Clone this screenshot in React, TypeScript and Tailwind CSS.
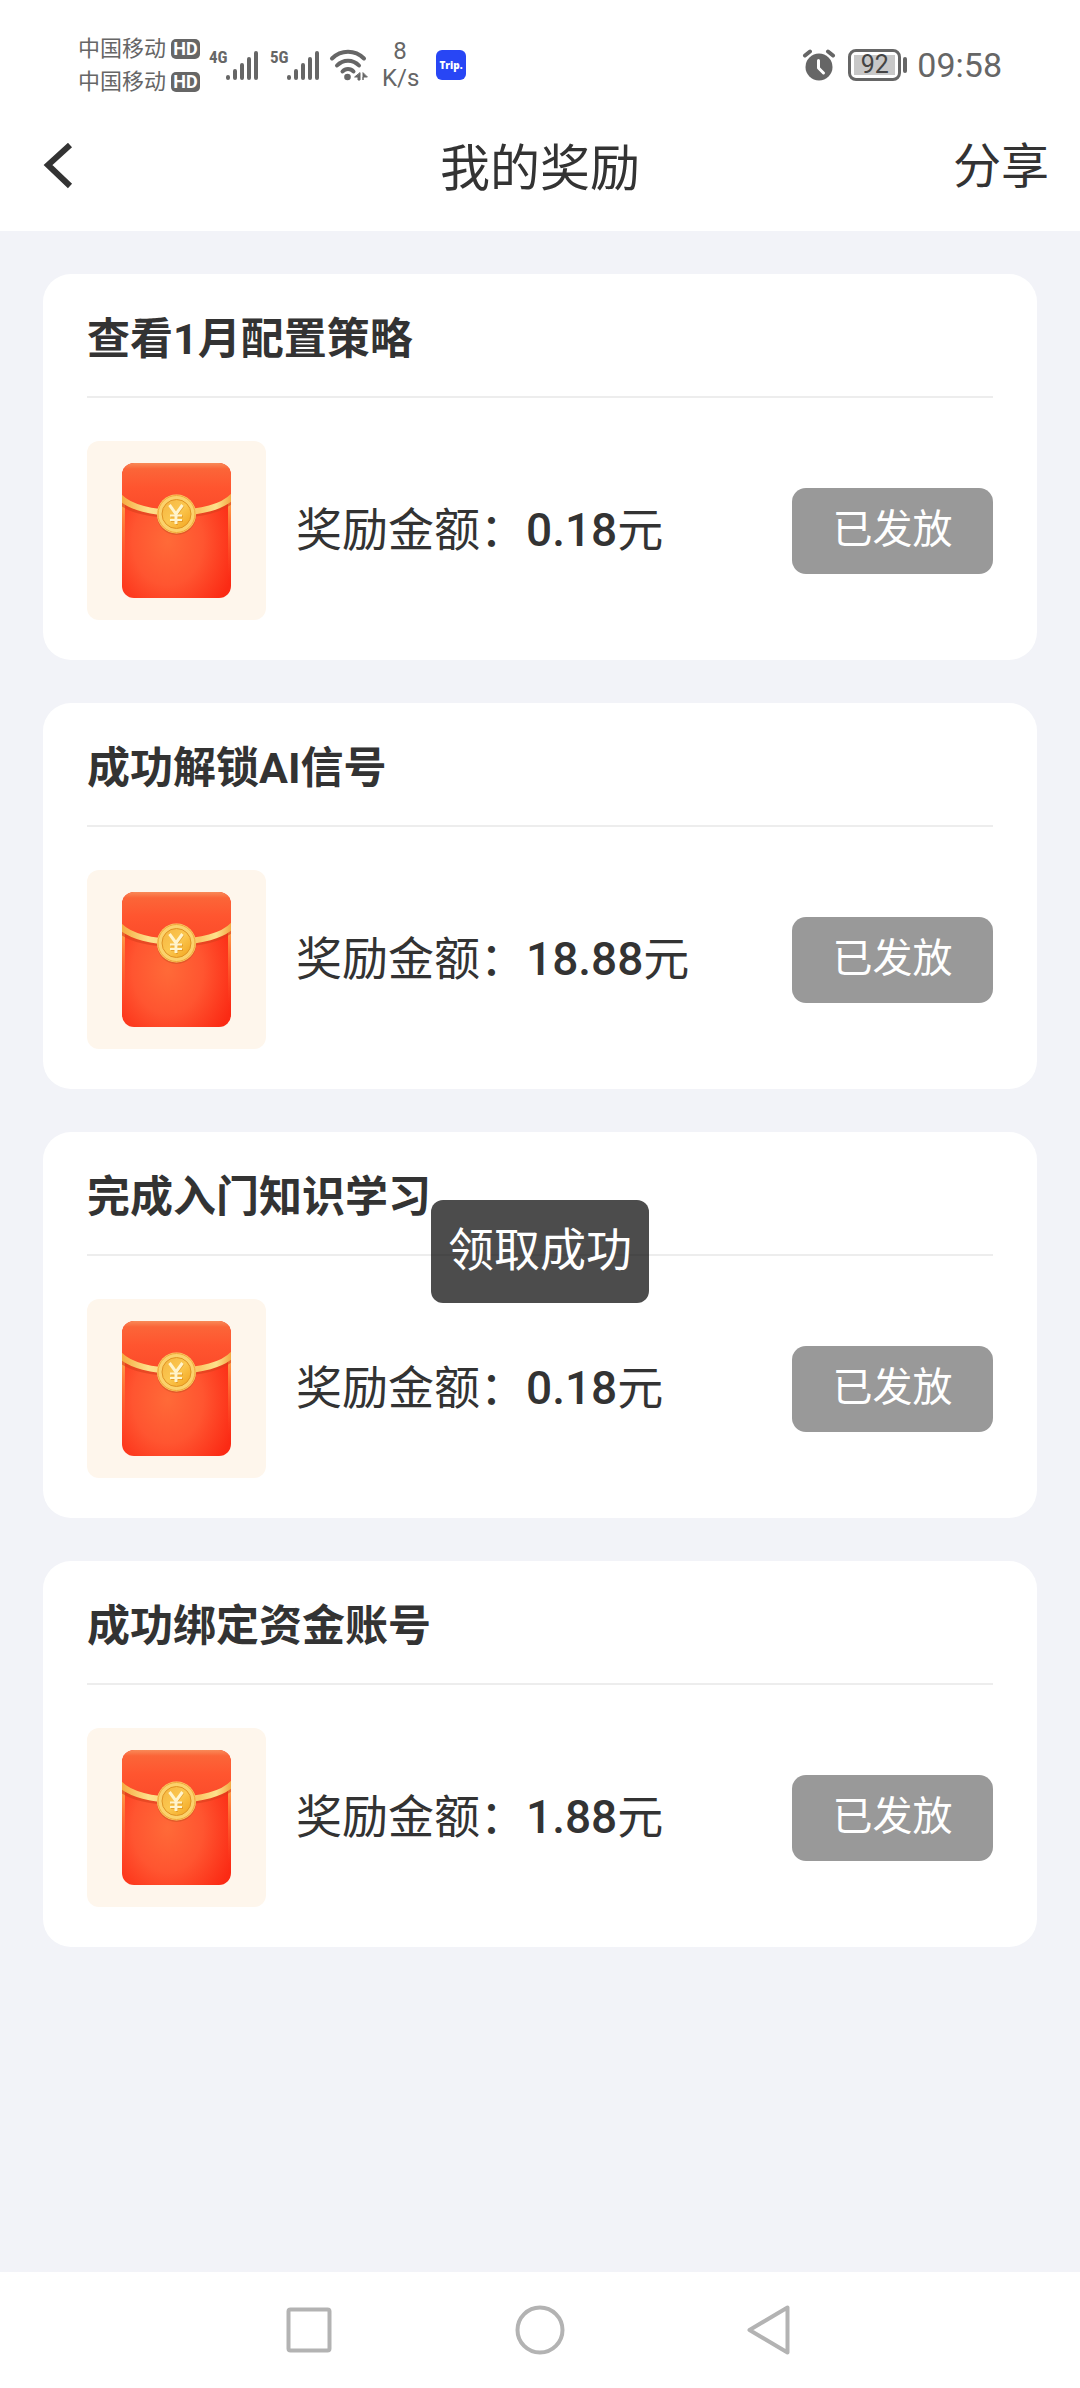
type Reward = { title: string; amount: string };

const rewards: Reward[] = [
  { title: "查看1月配置策略", amount: "0.18" },
  { title: "成功解锁AI信号", amount: "18.88" },
  { title: "完成入门知识学习", amount: "0.18" },
  { title: "成功绑定资金账号", amount: "1.88" },
];

function Carrier() {
  return (
    <div className="flex items-center gap-[5px]">
      <span className="text-[22px] leading-[33px] whitespace-nowrap">中国移动</span>
      <span className="flex h-5 w-[29px] items-center justify-center rounded-[5px] bg-[#666666] text-[18px] leading-5 font-bold text-white">
        HD
      </span>
    </div>
  );
}

function Signal({ label }: { label: string }) {
  return (
    <div className="flex h-[31px] items-start">
      <span className="w-4 text-[17px] leading-[14px] font-bold whitespace-nowrap font-['Roboto_Condensed',Roboto,sans-serif]">
        {label}
      </span>
      <svg className="h-[31px] w-[34px]" viewBox="0 0 34 31" stroke="#666666" strokeWidth="4" strokeLinecap="round" aria-hidden="true">
        <path d="M3 27v1M10 21v7M17 15v13M24 9v19M31 3v25" />
      </svg>
    </div>
  );
}

function WifiIcon() {
  return (
    <svg className="h-8 w-[39px]" viewBox="0 0 39 32" fill="none" stroke="#666666" strokeLinecap="round" aria-hidden="true">
      <path d="M3 9.5C12 0.5 26 0.5 35 9.5" strokeWidth="4" />
      <path d="M8 16.5c6-6.5 16-6.5 22 0" strokeWidth="4" />
      <path d="M13.5 22.5c3-3.5 8-3.5 11 0" strokeWidth="4" />
      <circle cx="18.5" cy="28" r="3.3" fill="#666666" stroke="none" />
      <path d="M31 24v7h-2v-3h-3zM34 24v7v-3h4z" fill="#666666" strokeWidth="1" strokeLinejoin="round" />
    </svg>
  );
}

function AlarmIcon() {
  return (
    <svg className="h-8 w-[34px]" viewBox="0 0 34 32" fill="none" aria-hidden="true">
      <circle cx="17" cy="18" r="13.5" fill="#666666" />
      <path d="M3 6.5L8 2.5M31 6.5L26 2.5" stroke="#666666" strokeWidth="4" strokeLinecap="round" />
      <path d="M16.5 11.5v7.5l5 5" stroke="#fff" strokeWidth="3" strokeLinecap="round" strokeLinejoin="round" />
    </svg>
  );
}

function StatusBar() {
  return (
    <div className="flex h-[103px] items-center justify-between pt-[27px] pr-[78px] pl-[78px] text-[#666666]">
      <div className="flex items-center">
        <div>
          <Carrier />
          <Carrier />
        </div>
        <div className="ml-[9px] flex gap-[11px]">
          <Signal label="4G" />
          <Signal label="5G" />
        </div>
        <div className="ml-[9px]">
          <WifiIcon />
        </div>
        <div className="ml-[14px] flex w-9 flex-col text-center text-[24px] leading-[27px]">
          <span>8</span>
          <span>K/s</span>
        </div>
        <div className="ml-[18px] flex h-[30px] w-[30px] items-center justify-center rounded-[6px] bg-[#2846f5] text-[10px] font-extrabold text-white font-['Open_Sans',sans-serif]">
          Trip.
        </div>
      </div>
      <div className="flex items-center">
        <AlarmIcon />
        <div className="ml-[12px] flex h-8 w-[53px] rounded-[8px] border-[3px] border-[#666666] p-[3px]">
          <span className="flex flex-1 items-center justify-center bg-[#c8c8c8] text-[25px] leading-5 text-[#444444]">
            92
          </span>
        </div>
        <div className="ml-[2px] h-4 w-1 rounded-full bg-[#666666]" />
        <span className="ml-[10px] text-[34px] leading-10">09:58</span>
      </div>
    </div>
  );
}

function RedPacket() {
  return (
    <svg className="h-[179px] w-[179px] shrink-0 rounded-[12px] bg-[#fef6ec]" viewBox="0 0 179 179" fill="none" aria-hidden="true">
      <defs>
        <radialGradient id="packet" cx="0.42" cy="0.58" r="0.65">
          <stop offset="0" stopColor="#ff6a38" />
          <stop offset="0.5" stopColor="#ff5530" />
          <stop offset="1" stopColor="#fb2a14" />
        </radialGradient>
        <linearGradient id="flap" x1="0" y1="0" x2="0" y2="1">
          <stop offset="0" stopColor="#f88a58" />
          <stop offset="0.12" stopColor="#fb6538" />
          <stop offset="0.5" stopColor="#ff552f" />
          <stop offset="1" stopColor="#fb4b2a" />
        </linearGradient>
        <linearGradient id="cord" x1="0" y1="0" x2="1" y2="0">
          <stop offset="0" stopColor="#f5a83c" />
          <stop offset="0.25" stopColor="#fde08a" />
          <stop offset="0.7" stopColor="#fbc766" />
          <stop offset="0.85" stopColor="#fde28c" />
          <stop offset="1" stopColor="#f2a23a" />
        </linearGradient>
        <linearGradient id="edge" x1="0" y1="0" x2="0" y2="1">
          <stop offset="0" stopColor="#ffb050" />
          <stop offset="1" stopColor="#ff5028" stopOpacity="0" />
        </linearGradient>
        <linearGradient id="coin" x1="0" y1="0" x2="1" y2="1">
          <stop offset="0" stopColor="#f5b440" />
          <stop offset="0.5" stopColor="#fbc850" />
          <stop offset="1" stopColor="#f2a21c" />
        </linearGradient>
        <clipPath id="body">
          <rect x="35" y="22" width="109" height="135" rx="12" />
        </clipPath>
      </defs>
      <g clipPath="url(#body)">
        <rect x="35" y="22" width="109" height="135" fill="url(#packet)" />
        <rect x="35" y="56" width="3" height="80" fill="url(#edge)" />
        <rect x="141" y="56" width="3" height="80" fill="url(#edge)" />
        <path d="M35 22h109v34C127 76 52 76 35 56z" fill="url(#flap)" />
        <path d="M33 60C53 79 126 79 146 58" stroke="#d8401c" strokeOpacity="0.6" strokeWidth="6" />
        <path d="M33 56C53 77 126 77 146 55" stroke="url(#cord)" strokeWidth="6" />
      </g>
      <circle cx="89.5" cy="74.5" r="19.5" fill="#c8501c" fillOpacity="0.5" />
      <circle cx="89.5" cy="73" r="19.5" fill="#fbd26c" />
      <circle cx="89.5" cy="73" r="18.5" stroke="#f0a83a" strokeWidth="1" />
      <circle cx="89.5" cy="73" r="14.5" fill="url(#coin)" stroke="#e09424" strokeWidth="1" />
      <g strokeWidth="3">
        <path d="M83.500 65L90 73.500L96.500 65M90 73v11M84 75.500h12M84 80h12" stroke="#d98a1c" strokeOpacity="0.6" strokeWidth="2" />
        <path d="M82.500 64L89 73L95.500 64M89 72v11" stroke="#fff4cc" />
        <path d="M83 74.500h12M83 79h12" stroke="#fff4cc" strokeWidth="2" />
      </g>
    </svg>
  );
}

function RewardCard({ title, amount }: Reward) {
  return (
    <li className="rounded-[28px] bg-white px-[44px] pb-[40px]">
      <h2 className="border-b-2 border-[#ededed] pt-[33px] pb-[25px] text-[43px] leading-[64px] font-bold">{title}</h2>
      <div className="flex items-center pt-[43px]">
        <RedPacket />
        <p className="ml-[30px] flex-1 pb-[6px] text-[46px] leading-[64px] whitespace-nowrap">
          <span className="font-['Noto_Sans_CJK_SC',sans-serif]">奖励金额：</span>
          <span className="font-medium">{amount}</span>元
        </p>
        <button type="button" className="h-[86px] w-[201px] rounded-[14px] bg-[#999999] pb-[2px] text-[40px] text-white">
          已发放
        </button>
      </div>
    </li>
  );
}

export default function App() {
  return (
    <div className="flex min-h-screen flex-col bg-[#f2f3f8] text-[#333333] font-[Roboto,'Noto_Sans_CJK_SC',sans-serif]">
      <div className="bg-white">
        <StatusBar />
        <header className="grid h-32 grid-cols-[1fr_auto_1fr] items-center px-[31px]">
          <button type="button" aria-label="返回" className="justify-self-start pl-2">
            <svg className="h-12 w-9" viewBox="0 0 36 48" fill="none" stroke="#333333" strokeWidth="6" aria-hidden="true">
              <path d="M31 2L9 22l22 21" />
            </svg>
          </button>
          <h1 className="pt-1 text-[50px] leading-[72px]">我的奖励</h1>
          <button type="button" className="justify-self-end text-[48px] leading-[72px]">分享</button>
        </header>
      </div>
      <main className="relative flex-1 p-[43px]">
        <ul className="flex flex-col gap-[43px]">
          {rewards.map((r) => (
            <RewardCard key={r.title} {...r} />
          ))}
        </ul>
        <div className="pointer-events-none absolute inset-0 flex items-center justify-center">
          <div role="status" className="rounded-[12px] bg-black/70 px-[17px] pt-[18px] pb-[21px] text-[46px] leading-[64px] text-white">
            领取成功
          </div>
        </div>
      </main>
      <nav className="flex h-[116px] items-center justify-center gap-[181px] bg-white" aria-label="系统导航">
        <button type="button" aria-label="最近任务">
          <svg className="h-[50px] w-[50px]" viewBox="0 0 50 50" fill="none" stroke="#b3b3b3" strokeWidth="4" aria-hidden="true">
            <rect x="4.5" y="4.5" width="41" height="41" rx="2" />
          </svg>
        </button>
        <button type="button" aria-label="主屏幕">
          <svg className="h-[50px] w-[50px]" viewBox="0 0 50 50" fill="none" stroke="#b3b3b3" strokeWidth="4" aria-hidden="true">
            <circle cx="25" cy="25" r="22.5" />
          </svg>
        </button>
        <button type="button" aria-label="返回上一页">
          <svg className="h-[50px] w-[50px]" viewBox="0 0 50 50" fill="none" stroke="#b3b3b3" strokeWidth="4" strokeLinejoin="round" aria-hidden="true">
            <path d="M41.5 2.5v45L3.5 25z" />
          </svg>
        </button>
      </nav>
    </div>
  );
}
